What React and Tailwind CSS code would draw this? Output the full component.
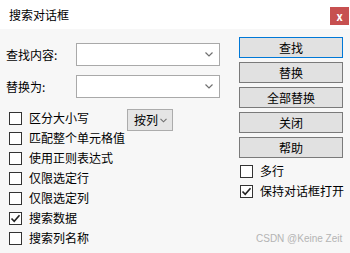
import React from "react";

const font = { fontFamily: '"Microsoft YaHei", "Noto Sans CJK SC", "Noto Sans", sans-serif' };

function Check({ checked, label }) {
  return (
    <div className="flex h-[20px] items-center">
      <div className="flex h-[13px] w-[13px] shrink-0 items-center justify-center border border-[#333333] bg-white">
        {checked && (
          <svg width="11" height="11" viewBox="0 0 11 11">
            <path d="M1.5 5.5 L4.2 8.3 L9.5 2.2" fill="none" stroke="#222" strokeWidth="1.6" />
          </svg>
        )}
      </div>
      <span className="ml-[7px] whitespace-nowrap text-[12px] leading-none text-black">{label}</span>
    </div>
  );
}

function Combo({ label }) {
  return (
    <div className="flex h-[23px] items-center">
      <span className="w-[70px] text-[12px] leading-none text-black">{label}</span>
      <div className="flex h-[23px] w-[144px] items-center justify-end border border-[#a9a9a9] bg-white pr-[6px]">
        <svg width="8" height="5" viewBox="0 0 8 5">
          <path d="M0.5 0.5 L4 4 L7.5 0.5" fill="none" stroke="#707070" strokeWidth="1.2" />
        </svg>
      </div>
    </div>
  );
}

function Btn({ children, primary }) {
  return (
    <div
      className={
        "flex h-[21px] w-[104px] items-center justify-center border bg-[#e1e1e1] text-[12px] leading-none text-black " +
        (primary ? "border-[#0078d7]" : "border-[#7a7a7a]")
      }
    >
      {children}
    </div>
  );
}

export default function App() {
  return (
    <div className="relative h-[253px] w-[350px] overflow-hidden bg-[#f7f7f7]" style={font}>
      <div className="flex h-[29px] items-start justify-between bg-white">
        <span className="mt-[9px] pl-[9px] text-[12px] leading-none text-black">搜索对话框</span>
        <div className="mr-[1px] mt-[7px] flex h-[18px] w-[19px] items-center justify-center bg-[#c75050] text-[11px] font-bold leading-none text-white">
          x
        </div>
      </div>
      <div className="flex">
        <div className="w-[239px] pl-[6px] pt-[14px]">
          <Combo label="查找内容:" />
          <div className="mt-[9px]">
            <Combo label="替换为:" />
          </div>
          <div className="mt-[10px] flex pl-[3px]">
            <div className="w-[118px]">
              <Check label="区分大小写" />
              <Check label="匹配整个单元格值" />
              <Check label="使用正则表达式" />
              <Check label="仅限选定行" />
              <Check label="仅限选定列" />
              <Check checked label="搜索数据" />
              <Check label="搜索列名称" />
            </div>
            <div className="mt-[1px] flex h-[22px] w-[46px] items-center justify-between border border-[#acacac] bg-[#e5e5e5] pl-[6px] pr-[5px]">
              <span className="text-[12px] leading-none text-black">按列</span>
              <svg width="7" height="5" viewBox="0 0 7 5">
                <path d="M0.5 0.8 L3.5 3.8 L6.5 0.8" fill="none" stroke="#707070" strokeWidth="1.1" />
              </svg>
            </div>
          </div>
        </div>
        <div className="flex flex-col pt-[8px]">
          <div className="flex flex-col gap-[4px]">
            <Btn primary>查找</Btn>
            <Btn>替换</Btn>
            <Btn>全部替换</Btn>
            <Btn>关闭</Btn>
            <Btn>帮助</Btn>
          </div>
          <div className="mt-[3px] pl-[1px]">
            <Check label="多行" />
            <Check checked label="保持对话框打开" />
          </div>
        </div>
      </div>
      <div
        className="absolute left-[256px] top-[234px] text-[10px] leading-none text-[#b4b4b4]"
        style={{ fontFamily: '"Liberation Sans", Arial, sans-serif' }}
      >
        CSDN @Keine Zeit
      </div>
    </div>
  );
}
